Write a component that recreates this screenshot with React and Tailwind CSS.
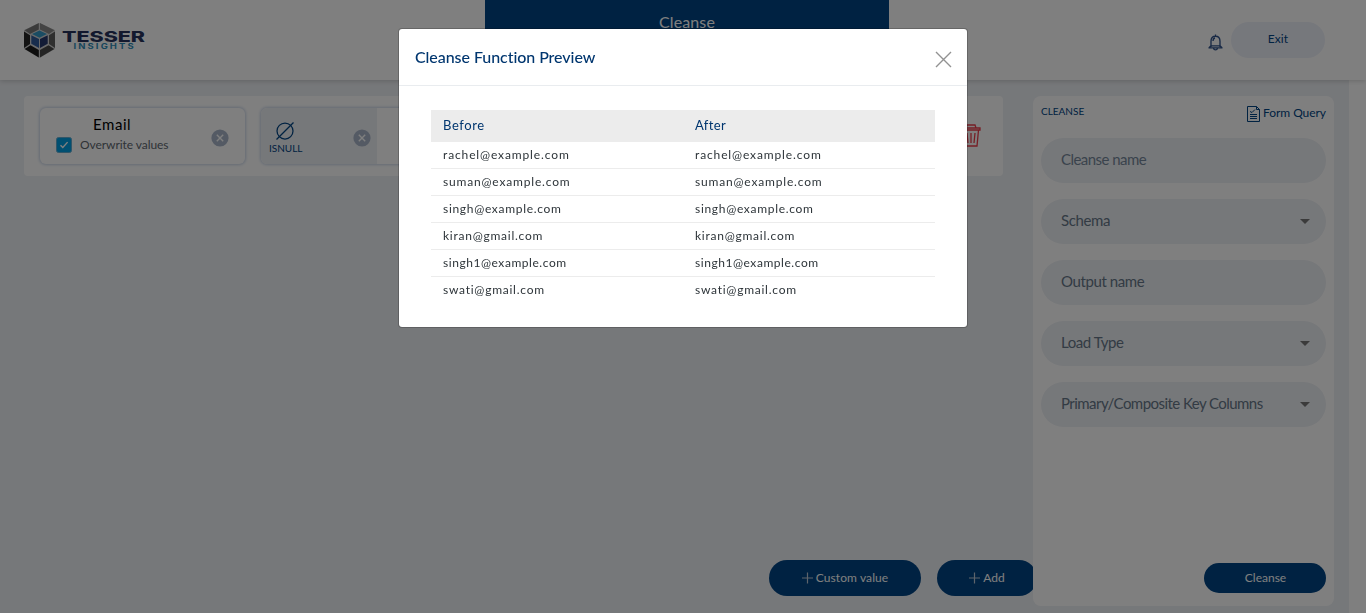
import React from "react";

const rows = [
  ["rachel@example.com", "tracking-[0.87px]"],
  ["suman@example.com", "tracking-[0.82px]"],
  ["singh@example.com", "tracking-[0.69px]"],
  ["kiran@gmail.com", "tracking-[0.75px]"],
  ["singh1@example.com", "tracking-[0.55px]"],
  ["swati@gmail.com", "tracking-[0.75px]"],
];

const fields = [
  { label: "Cleanse name", select: false, tone: "text-[#75879a] tracking-[-0.55px]" },
  { label: "Schema", select: true, tone: "text-[#667789] tracking-[-0.4px]" },
  { label: "Output name", select: false, tone: "text-[#667789] tracking-[-0.4px]" },
  { label: "Load Type", select: true, tone: "text-[#667789] tracking-[-0.45px]" },
  { label: "Primary/Composite Key Columns", select: true, tone: "text-[#667789] tracking-[-0.55px]" },
];

function Logo() {
  return (
    <svg width="122" height="38" viewBox="0 0 122 38" className="shrink-0">
      <polygon points="15.5,1 31,8 31,27 15.5,36 0,27 0,8" fill="#d5d5d5" />
      <polygon points="14.8,1 14.8,7.5 6,12 0.5,8.3" fill="#777" />
      <polygon points="16,1 16,7.5 25,12 30.5,8.3" fill="#888" />
      <polygon points="0,9.5 6,13.2 6,22 0,26" fill="#262626" />
      <polygon points="31,9.5 25,13.2 25,22 31,26" fill="#5e5e5e" />
      <polygon points="0.7,27 6.5,23.3 14.8,28 14.8,35.5" fill="#1c1c1c" />
      <polygon points="30.3,27 24.5,23.3 16,28 16,35.5" fill="#484848" />
      <polygon points="15.5,8.5 23,12 15.5,15.8 8,12" fill="#3499c6" />
      <polygon points="7.3,13.2 15,17 15,26 7.3,21.8" fill="#305b9b" />
      <polygon points="23.7,13.2 16,17 16,26 23.7,21.8" fill="#26386d" />
      <text x="38" y="19.6" fontFamily="Inter, sans-serif" fontWeight="800" fontSize="14.5" textLength="83" lengthAdjust="spacingAndGlyphs" fill="#26335c">TESSER</text>
      <g transform="translate(49.5 27) scale(1.35 1)">
        <text x="0" y="0" fontFamily="Inter, sans-serif" fontWeight="700" fontSize="7" textLength="44.5" fill="#2e8cb7">INSIGHTS</text>
      </g>
    </svg>
  );
}

function RemoveIcon() {
  return (
    <svg width="18" height="18" viewBox="0 0 18 18" className="shrink-0">
      <circle cx="9" cy="9" r="8.6" fill="#a8b5c8" />
      <path d="M5.8 5.8l6.4 6.4M12.2 5.8l-6.4 6.4" stroke="#fff" strokeWidth="1.4" />
    </svg>
  );
}

function Plus() {
  return (
    <svg width="11" height="12" viewBox="0 0 11 12">
      <path d="M5.5 .5v11M0 6h11" stroke="#bcc8d6" strokeWidth="1.2" />
    </svg>
  );
}

function Header() {
  return (
    <header className="relative z-10 flex h-20 shrink-0 items-start justify-between bg-white pl-6 pr-[41px] shadow-[0_1px_5px_rgba(0,0,0,0.18)]">
      <div className="w-[461px] pt-[22px]"><Logo /></div>
      <div className="h-10 w-[404px] shrink-0 bg-[#004484] pt-[10px] text-center text-[16px] leading-6 tracking-[0.1px] text-white">Cleanse</div>
      <div className="flex flex-1 items-center justify-end gap-2 pt-[22px]">
        <svg width="15" height="17" viewBox="0 0 15 17" fill="none" stroke="#31538a" strokeWidth="1.35" className="mt-1">
          <path d="M7.5 .5v1.6M3 13V7.2C3 4 5 2.2 7.5 2.2S12 4 12 7.2V13M3 11.8h9M.5 13.8h14M1 13.8l2-2M14 13.8l-2-2M5.5 14.2c.4 2.3 3.6 2.3 4 0M5 7c.1-1.8.8-2.8 2-3" />
        </svg>
        <button className="h-9 w-[94px] rounded-full bg-[#edf0f9] pb-0.5 text-[12px] tracking-[0.1px] text-[#004484]">Exit</button>
      </div>
    </header>
  );
}

function Pipeline() {
  return (
    <section className="mt-4 flex h-20 w-[979px] items-center rounded bg-white pl-4">
      <div className="flex h-14 w-[205px] items-center justify-between rounded-md bg-white pl-4 pr-4 shadow-[0_0_3px_1px_#cbd7e9]">
        <div className="pb-[3px]">
          <div className="-mt-px mb-px pl-[37px] text-[15px] leading-5 tracking-[0.55px] text-black">Email</div>
          <div className="flex h-5 items-center gap-2 text-[12px] tracking-[-0.06px] text-[#5e676f]">
            <svg width="16" height="16" viewBox="0 0 16 16">
              <rect x=".5" y=".5" width="15" height="15" rx="2" fill="#009fe3" stroke="#65add0" />
              <path d="M4.5 8.2l2.3 2.3 4.8-5.4" fill="none" stroke="#fff" strokeWidth="1.4" />
            </svg>
            Overwrite values
          </div>
        </div>
        <div className="pt-[3px]"><RemoveIcon /></div>
      </div>
      <div className="ml-[16px] flex h-14 w-[649px] rounded-md bg-white shadow-[0_0_3px_1px_#cbd7e9]">
        <div className="flex w-[116px] items-center justify-between rounded-l-md bg-[#edf0f4] pl-2 pr-[6px]">
          <div className="flex flex-col items-start">
            <svg width="20" height="20" viewBox="0 0 20 20" className="ml-1.5 mt-1" fill="none" stroke="#004484" strokeWidth="1.25">
              <circle cx="10" cy="10" r="8" /><path d="M1.5 18.5l17-17" />
            </svg>
            <div className="text-[10px] leading-[14px] text-[#004484]">ISNULL</div>
          </div>
          <div className="pt-[3px]"><RemoveIcon /></div>
        </div>
      </div>
      <svg width="20" height="24" viewBox="0 0 20 24" className="ml-[51px]" fill="none" stroke="#ed3d4b" strokeWidth="1.3">
        <path d="M1 4h18v2H1zM5 4l1-3h8l1 3M2.5 6l1.5 16h12L17.5 6M6 9l1 10M10 9v10M14 9l-1 10" />
      </svg>
    </section>
  );
}

function Sidebar() {
  return (
    <aside className="relative mt-4 flex h-[510px] w-[301px] shrink-0 flex-col rounded-lg bg-white px-2">
      <div className="flex h-[42px] shrink-0 justify-between text-[#004484]">
        <div className="pt-[8px] text-[10px] leading-[14px]">CLEANSE</div>
        <div className="flex gap-[3px] pt-[10px] text-[12px] leading-[14px] tracking-[-0.05px]">
          <svg width="13" height="16" viewBox="0 0 13 16" fill="none" stroke="#004484" strokeWidth="1">
            <path d="M.5 .5h9l3 3v12H.5zM9.5 .5v3h3M3 8.5h7M3 10.5h7M3 12.5h7M3 5.5l2 1 3-3" />
          </svg>
          <span>Form Query</span>
        </div>
      </div>
      <div className="flex flex-col gap-4">
        {fields.map((f) => (
          <div key={f.label} className={`flex h-[45px] items-center justify-between rounded-full bg-[#edf0f4] pb-px pl-5 pr-4 text-[15px] ${f.tone}`}>
            <span className="pb-px">{f.label}</span>
            {f.select && (
              <svg width="10" height="5" viewBox="0 0 10 5" className="mt-px"><path d="M0 0h10L5 5z" fill="#777" /></svg>
            )}
          </div>
        ))}
      </div>
      <button className="mb-[13px] mt-auto h-[30px] w-[122px] self-end rounded-full bg-[#004484] pl-px text-[12px] text-white">Cleanse</button>
    </aside>
  );
}

function PreviewDialog() {
  return (
    <div className="fixed inset-0 z-20 flex items-start justify-center bg-black/50 pt-7">
      <div role="dialog" aria-label="Cleanse Function Preview" className="h-[300px] w-[570px] rounded border border-black/20 bg-white bg-clip-padding">
        <div className="flex h-[57px] items-start justify-between border-b border-[#e9ecef] pl-4 pr-[15px]">
          <h2 className="pt-4 text-[16px] font-medium leading-6 tracking-[-0.06px] text-[#00366f]">Cleanse Function Preview</h2>
          <svg width="17" height="17" viewBox="0 0 17 17" className="mt-[22px]"><path d="M1 1l15 15M16 1L1 16" stroke="#929292" strokeWidth="1.4" /></svg>
        </div>
        <div className="px-8 pt-6">
          <div className="grid h-8 grid-cols-2 items-center bg-[#ececec] text-[13px] tracking-[0.6px] text-[#00366f]">
            <div className="pl-3">Before</div><div className="pl-3 tracking-[0.35px]">After</div>
          </div>
          {rows.map(([mail, tracking]) => (
            <div key={mail} className={`grid h-[27px] grid-cols-2 items-center border-b border-[#ececec] text-[12px] leading-[18px] text-[#2d3439] last:border-transparent ${tracking}`}>
              <div className="pl-3">{mail}</div><div className="pl-3">{mail}</div>
            </div>
          ))}
        </div>
      </div>
    </div>
  );
}

export default function App() {
  return (
    <div className="flex h-[613px] flex-col overflow-hidden bg-white font-['Lato',sans-serif]">
      <Header />
      <main className="flex min-h-0 flex-1">
        <div className="flex w-[1349px] bg-[#edf0f4] pl-6">
          <div className="flex w-[1009px] shrink-0 flex-col">
            <Pipeline />
            <div className="mb-[17px] ml-[745px] mt-auto flex w-[264px] gap-4 overflow-hidden text-[12px] tracking-[0.1px] text-white">
              <button className="flex h-9 w-[152px] shrink-0 items-center justify-center gap-[3px] rounded-full bg-[#004484]"><Plus />Custom value</button>
              <button className="flex h-9 w-[100px] shrink-0 items-center justify-center gap-[3px] rounded-full bg-[#004484]"><Plus />Add</button>
            </div>
          </div>
          <Sidebar />
        </div>
      </main>
      <PreviewDialog />
    </div>
  );
}
